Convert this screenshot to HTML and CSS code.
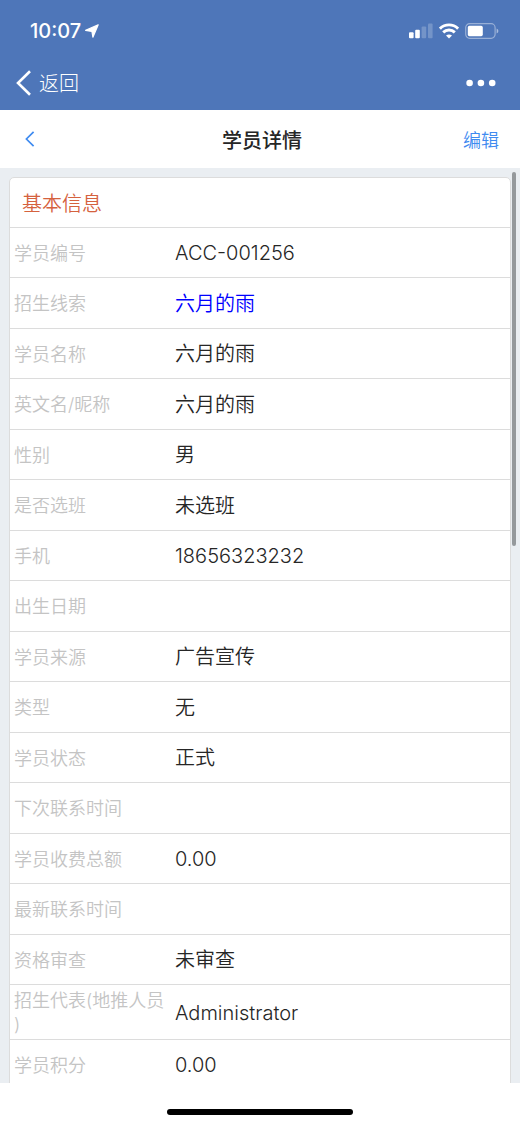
FILE: index.html
```html
<!DOCTYPE html>
<html lang="zh-CN">
<head>
<meta charset="utf-8">
<meta name="viewport" content="width=device-width, initial-scale=1">
<title>学员详情</title>
<link rel="stylesheet" href="styles.css">
</head>
<body>
<div class="app">
  <header class="shell">
    <div class="status">
      <div class="clock">
        <span>10:07</span>
        <svg width="14" height="14" viewBox="0 0 14 14" aria-hidden="true"><path d="M13.2.8 7.9 13.2 6.9 7.4.6 6.4Z" fill="#fff" stroke="#fff" stroke-width="1.2" stroke-linejoin="round"/></svg>
      </div>
      <div class="indicators">
        <svg width="24" height="16" viewBox="0 0 24 16" fill="#fff" aria-hidden="true"><rect x="0" y="9.3" width="4.6" height="6" rx="1"/><rect x="6.2" y="6.8" width="4.6" height="8.5" rx="1"/><rect x="12.6" y="3.6" width="4.6" height="11.7" rx="1" opacity=".22"/><rect x="19" y=".6" width="4.6" height="14.7" rx="1" opacity=".22"/></svg>
        <svg class="wifi" width="20" height="16" viewBox="0 0 20 16" aria-hidden="true"><g fill="none" stroke="#fff" stroke-width="2.9"><path d="M.9 5.6A13 13 0 0 1 19.1 5.6"/><path d="M4.2 9.4A8.3 8.3 0 0 1 15.8 9.4"/></g><path d="M10 15.4 7 12.6Q10 10.2 13 12.6Z" fill="#fff"/></svg>
        <svg width="34" height="16" viewBox="0 0 34 16" aria-hidden="true"><rect x=".7" y=".7" width="29.4" height="14.6" rx="4" fill="none" stroke="#fff" stroke-opacity=".42" stroke-width="1.2"/><rect x="2.8" y="2.8" width="15" height="10.4" rx="1.6" fill="#fff"/><path d="M31.6 5.4Q33.4 6.2 33.4 8T31.6 10.6Z" fill="#fff" opacity=".5"/></svg>
      </div>
    </div>
    <div class="shell-bar">
      <button class="back" type="button">
        <svg width="16" height="26" viewBox="0 0 16 26" aria-hidden="true"><path d="M14 1.2 2 13 14 24.8" fill="none" stroke="#fff" stroke-width="2.6"/></svg>
        <span>返回</span>
      </button>
      <button class="more" type="button" aria-label="更多">
        <svg width="30" height="8" viewBox="0 0 30 8" fill="#fff" aria-hidden="true"><circle cx="3.6" cy="4" r="3.3"/><circle cx="14.9" cy="4" r="3.3"/><circle cx="26.2" cy="4" r="3.3"/></svg>
      </button>
    </div>
  </header>

  <nav class="titlebar">
    <button class="prev" type="button" aria-label="上一页">
      <svg width="10" height="16" viewBox="0 0 10 16" aria-hidden="true"><path d="M8.6.9 1.4 8 8.6 15.1" fill="none" stroke="#3f8bf0" stroke-width="1.7"/></svg>
    </button>
    <h1>学员详情</h1>
    <button class="edit" type="button">编辑</button>
  </nav>

  <div class="viewport">
    <main class="scroller">
      <section class="card">
        <h2>基本信息</h2>
        <dl class="fields">
          <div class="row"><dt>学员编号</dt><dd>ACC-001256</dd></div>
          <div class="row"><dt>招生线索</dt><dd><a href="#">六月的雨</a></dd></div>
          <div class="row"><dt>学员名称</dt><dd>六月的雨</dd></div>
          <div class="row"><dt>英文名/昵称</dt><dd>六月的雨</dd></div>
          <div class="row"><dt>性别</dt><dd>男</dd></div>
          <div class="row"><dt>是否选班</dt><dd>未选班</dd></div>
          <div class="row"><dt>手机</dt><dd>18656323232</dd></div>
          <div class="row"><dt>出生日期</dt><dd></dd></div>
          <div class="row"><dt>学员来源</dt><dd>广告宣传</dd></div>
          <div class="row"><dt>类型</dt><dd>无</dd></div>
          <div class="row"><dt>学员状态</dt><dd>正式</dd></div>
          <div class="row"><dt>下次联系时间</dt><dd></dd></div>
          <div class="row"><dt>学员收费总额</dt><dd>0.00</dd></div>
          <div class="row"><dt>最新联系时间</dt><dd></dd></div>
          <div class="row"><dt>资格审查</dt><dd>未审查</dd></div>
          <div class="row"><dt>招生代表(地推人员)</dt><dd>Administrator</dd></div>
          <div class="row"><dt>学员积分</dt><dd>0.00</dd></div>
        </dl>
      </section>
    </main>
    <div class="thumb"></div>
  </div>

  <footer class="home"><div class="home-bar"></div></footer>
</div>
</body>
</html>
```
FILE: styles.css
```css
* {
  box-sizing: border-box;
}

body {
  margin: 0;
  background: #fff;
  color: #262626;
  font-family: Inter, "Noto Sans CJK SC", sans-serif;
  font-size: 20px;
}

button {
  display: flex;
  align-items: center;
  padding: 0;
  border: 0;
  background: none;
  font: inherit;
  cursor: pointer;
}

svg {
  display: block;
}

.app {
  display: flex;
  flex-direction: column;
  height: 100vh;
}

.shell {
  flex: none;
  background: #4e76b9;
  color: #fff;
}

.status {
  display: flex;
  align-items: center;
  justify-content: space-between;
  height: 56px;
  padding: 6px 21px 0 30px;
}

.clock {
  display: flex;
  align-items: center;
  gap: 4px;
  font-size: 20px;
  font-weight: 500;
}

.indicators {
  display: flex;
  align-items: center;
  gap: 6px;
}

.shell-bar {
  display: flex;
  align-items: center;
  justify-content: space-between;
  height: 54px;
  padding: 0 24px 0 16px;
}

.back {
  gap: 7px;
  color: #fff;
  font-weight: 300;
  line-height: 28px;
}

.back span {
  padding-top: 2px;
}

.titlebar {
  display: grid;
  grid-template-columns: 1fr auto 1fr;
  align-items: center;
  flex: none;
  height: 58px;
  padding: 0 21px 0 25px;
}

.titlebar h1 {
  margin: 0;
  padding-top: 4px;
  font-size: 20px;
  font-weight: 500;
  line-height: 28px;
}

.edit {
  justify-self: end;
  color: #3f8bf0;
  font-size: 18px;
  font-weight: 350;
}

.viewport {
  position: relative;
  flex: 1;
  min-height: 0;
  background: #eaeef2;
}

.scroller {
  height: 100%;
  padding: 9px;
  overflow-y: auto;
  scrollbar-width: none;
}

.card {
  border: 1px solid #dcdcdc;
  border-radius: 5px;
  background: #fff;
}

.card h2 {
  height: 50px;
  margin: 0;
  padding: 1px 12px 0;
  border-bottom: 1px solid #dcdcdc;
  color: #d5623e;
  font-size: 20px;
  font-weight: 350;
  line-height: 50px;
}

.fields {
  margin: 0;
}

.row {
  display: flex;
  align-items: center;
  gap: 7px;
  min-height: 50px;
  padding: 2px 4px;
  border-bottom: 1px solid #dcdcdc;
}

.row:nth-child(even) {
  min-height: 51px;
}

.row dt {
  flex: none;
  width: 154px;
  padding-top: 2px;
  color: #c4c4c4;
  font-size: 18px;
  font-weight: 350;
  line-height: 24px;
  line-break: anywhere;
}

.row dd {
  flex: 1;
  margin: 0;
  padding-top: 1px;
  font-weight: 350;
  line-height: 28px;
}

.row a {
  color: #00f;
  text-decoration: none;
}

.thumb {
  position: absolute;
  top: 4px;
  right: 4px;
  width: 4px;
  height: 374px;
  border-radius: 2px;
  background: #95999c;
}

.home {
  display: flex;
  flex: none;
  justify-content: center;
  height: 43px;
  padding-top: 26px;
}

.home-bar {
  width: 186px;
  height: 6px;
  border-radius: 3px;
  background: #000;
}
```
